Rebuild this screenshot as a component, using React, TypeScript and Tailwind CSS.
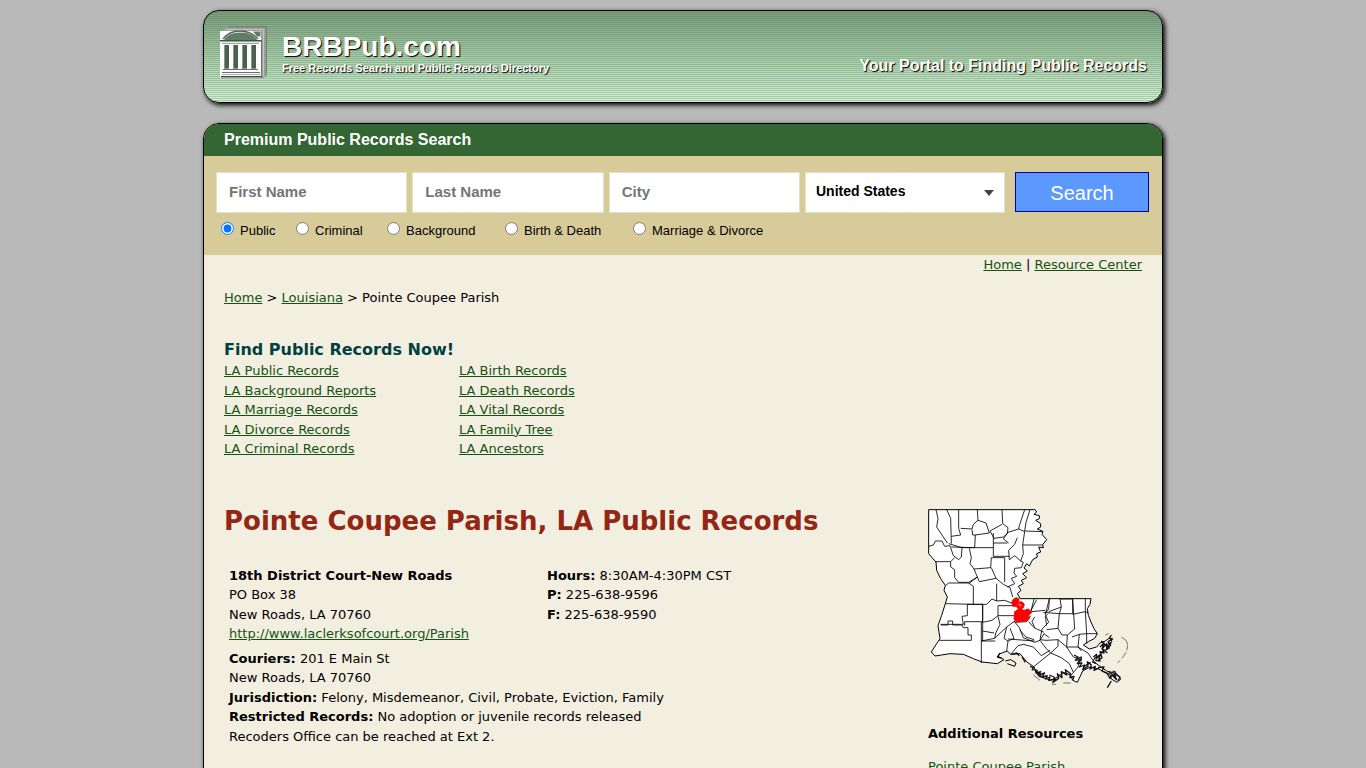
import React, { useState } from 'react';

const recordTypes = [
  { id: 'public', label: 'Public', width: 'w-[75px]' },
  { id: 'criminal', label: 'Criminal', width: 'w-[91px]' },
  { id: 'background', label: 'Background', width: 'w-[118px]' },
  { id: 'birth-death', label: 'Birth & Death', width: 'w-[128px]' },
  { id: 'marriage-divorce', label: 'Marriage & Divorce', width: 'w-auto' },
];

const searchFields = ['First Name', 'Last Name', 'City'];

const recordLinks = [
  ['LA Public Records', 'LA Background Reports', 'LA Marriage Records', 'LA Divorce Records', 'LA Criminal Records'],
  ['LA Birth Records', 'LA Death Records', 'LA Vital Records', 'LA Family Tree', 'LA Ancestors'],
];

const TextLink: React.FC<{ children: React.ReactNode }> = ({ children }) => (
  <a href="#" className="text-[#145214] underline hover:no-underline">
    {children}
  </a>
);

// Courthouse with four columns
const Logo = () => (
  <svg width="47" height="54" viewBox="0 0 47 54" aria-hidden="true">
    <path d="M2 5L9 .5H46.500V50L41 53V5Z" fill="#9aa09b" />
    <path d="M5 3.500H43.500V50" fill="none" stroke="#c3c7c3" />
    <path d="M9 .8H46.300V49" fill="none" stroke="#70776f" />
    <path d="M41.500 14V52" stroke="#6c736d" />
    <path d="M0 5H41V52H0Z" fill="#fbfcfb" />
    <path d="M4 14Q8 6.500 20 6.500Q33 6.500 37 14Z" fill="#5f7f64" />
    <path d="M3 13Q9 5 20 5Q31 5 38 13" fill="none" stroke="#5b625c" strokeWidth="1.300" />
    <path d="M33 5.500H40.500V10.500H37Z" fill="#5f7f64" />
    <path d="M0 14.700H41" stroke="#474e48" strokeWidth="1.600" />
    <path d="M2 17.300H39" stroke="#8f9690" />
    <path d="M4 19H9V43H4ZM13 19H18V43H13ZM22 19H27V43H22ZM31 19H36V43H31Z" fill="#8d968f" />
    <path d="M5 19H9V42H5ZM14 19H18V42H14ZM23 19H27V42H23ZM32 19H36V42H32Z" fill="#48604c" />
    <path d="M3 43.500H38M2 46.500H40" stroke="#666d67" />
    <path d="M2 48.500H40" stroke="#a9aea9" />
    <path d="M1 50.700H41" stroke="#3e443f" strokeWidth="1.500" />
  </svg>
);

const ParishMap = () => (
  <svg width="200" height="182" viewBox="24 26 600 546" role="img" aria-label="Map of Louisiana parishes" strokeLinejoin="round">
    <path
      d="M26 28H345L350 35L342 42L358 46L358 55L347 60L362 70L362 80L352 86L368 93L366 102L380 118L368 133L370 142L356 140L362 155L350 160L352 170L338 178L328 197L320 190L312 203L322 212L308 220L320 232L304 240L310 250L295 258L303 270L292 280L298 290L300 295H513L510 312L502 325L505 345L513 365L522 385L532 400L524 414L505 424L490 434L508 446L530 440L540 428L556 422L570 412L576 424L562 432L568 444L548 452L540 464L524 472L520 482L534 494L560 512L590 520L602 536L592 546L574 536L570 522L552 514L536 506L510 500L488 512L472 546L458 540L452 524L430 516L414 530L392 540L370 532L348 514L342 500L320 484L300 460L272 462L262 452L240 460L234 468L252 478L232 490L186 485L160 475L130 462L90 460L45 467L34 455L50 430L60 415L54 376L65 345L76 310L82 290L72 270L76 255L62 235L50 210L48 185L36 172L26 160Z"
      fill="#fff"
      stroke="#000"
      strokeWidth="3"
    />
    <g fill="none" stroke="#000" strokeWidth="2.500">
      <path d="M48 28L54 55L50 80L66 104L82 128M80 28L92 54L94 130M116 28V84L122 104L94 108M172 28L174 60L160 72L156 86L122 84M174 60L198 68L208 98L166 104M246 28L248 70L264 82L262 100L250 110L222 114L210 92L246 72M314 28L298 76L296 86L264 96L250 116L266 128M330 28L318 66L314 92L370 94" />
      <path d="M26 138L40 134L46 122L66 122L74 138L90 136L100 166L116 178L124 170L126 142L86 130M94 140L164 142L166 104M126 142H220V168H268M156 88L158 104L166 104M220 98V142M220 128H262M296 86L314 94L308 134L368 134M308 134L310 160L302 182L284 166L268 178L266 150L284 132L292 112" />
      <path d="M48 184L92 184V200L104 208V232L116 246H146L172 230M92 184L104 172M148 144L154 172L150 190L162 206L212 202L214 172M162 206L172 230L178 244L228 234L214 202M214 172H254V246M228 234L250 252L270 262L278 290M302 182L310 186L304 202L284 204L282 218L290 228L274 234L284 250L262 260" />
      <path d="M76 256L86 248H146L160 258V312L76 310M172 230L146 250M230 250V302L216 296L200 312L160 312M230 302L254 300L280 310M142 312V346L126 348L130 372H62M188 312V422M142 312H188V364H134V376M62 374H84V362H98V374H126L130 382H144V404H154V420H58M188 366L216 360L234 346V316L286 316M184 364V488M234 348L240 372L228 396L224 414L184 422M188 392L222 398" />
      <path d="M234 346H284M224 414L260 380L284 362M260 380L252 414L264 422L260 452M264 422L282 414L270 384M282 362L298 382L310 412L344 426L360 420L372 400L388 412M264 416L344 422M184 422H226M272 462L294 436L310 432L340 440L364 466L390 450M284 366L320 364L332 346M326 364L342 382L372 396M332 332L350 298M334 334L376 330M300 390L318 410L342 418" />
      <path d="M388 296L376 342L386 366L366 386M388 296L386 326L376 340M342 296L332 336M420 296L424 320L386 334M424 320L418 340L370 336M384 340L376 348L380 376M418 340H458V296H420M418 340L414 384L380 388M458 296L464 386L442 404M496 296L496 334L504 338M458 342L496 334L500 400L478 402L456 410M500 400H532M478 402L474 440L484 452M442 404L440 440L476 440M414 384L426 404L442 404M366 386L360 418L378 420L414 418L440 440" />
      <path d="M340 500L392 458L424 472L448 490L460 516M392 458L378 444L360 420M440 440L460 470L486 478M474 440L504 458L520 482M500 400V430M414 418V438L392 458M344 382L336 364L344 350M480 480L474 500L454 524" />
    </g>
    <path d="M281 296L289 292L297 296L296 306L305 304L313 312L310 322L302 326L312 330L326 326L335 337L326 344L328 354L318 362L288 364L282 356L284 334L296 326L288 318L277 317L276 304Z" fill="#f00" stroke="#f00" strokeWidth="3" />
    <path d="M294 315L298 311L303 315L300 319" fill="none" stroke="#fff" strokeWidth="2" />
    {/* marshes along the gulf coast */}
    <g fill="none" stroke="#111" strokeWidth="4">
      <path d="M340 508L352 510L348 518L362 514L356 524L374 518L366 530L382 526L376 536L390 530L386 540L404 536L398 546L416 534L412 520L426 532L424 514L440 524L436 508L452 520L450 532L462 528L458 540M462 464L474 470L466 480L480 478L472 490L486 488L478 500L494 494L488 508L504 498L502 484L514 494L510 506L526 498L522 510L538 502" />
      <path d="M540 440L552 428L546 446L560 430L560 448L572 434L564 424L578 416L568 414L574 404M520 470L530 462L528 476L540 464L536 480L546 472L540 454L552 458L548 446L562 458M534 502L552 500L546 512L562 520L570 534L576 524L590 538L582 520L600 530L594 542M574 542L562 562M588 516L578 512M516 484L528 490" />
      <path d="M346 512L358 528L372 532M388 524L402 530L408 542M468 476L484 470L482 484M490 500L512 486M544 422L562 440L574 426M526 480L542 482M566 514L588 530M330 498L340 502L336 510M240 458L232 470L246 474M276 462L290 458L298 466M306 470L316 486" />
    </g>
    <path d="M256 482L272 478L288 488L284 498L262 490" fill="none" stroke="#000" strokeWidth="3" />
    <path d="M604 410L618 420L624 434L620 450M618 456L606 474M600 480L592 488M556 404L566 400M340 524L360 540M396 552H408M430 548H452" fill="none" stroke="#333" strokeWidth="2" />
  </svg>
);

export default function App() {
  const [recordType, setRecordType] = useState('public');

  return (
    <div className="min-h-screen bg-[#b9b9b9] pt-[10px] font-['DejaVu_Sans',Verdana,sans-serif] text-[13px] leading-normal text-black">
      <div className="mx-auto max-w-[960px]">
        {/* Banner */}
        <header className="mb-5 flex h-[93px] items-start justify-between rounded-2xl border border-black bg-[repeating-linear-gradient(to_bottom,transparent_0px,transparent_1px,rgba(60,120,65,0.28)_1px,rgba(60,120,65,0.28)_2px),linear-gradient(to_bottom,#7a9a7c,#a9cbab_50%,#d6f0d8)] pr-[15px] pl-4 font-['Liberation_Sans',Arial,sans-serif] font-bold text-white shadow-[2px_2px_5px_#000] [text-shadow:1px_1px_1px_#000]">
          <div className="flex gap-[15px] pt-[15px]">
            <Logo />
            <div className="pt-[5px]">
              <div className="text-[28px] leading-[31px]">BRBPub.com</div>
              <div className="text-[11px] leading-3">Free Records Search and Public Records Directory</div>
            </div>
          </div>
          <div className="pt-[43px] text-base">Your Portal to Finding Public Records</div>
        </header>

        <div className="overflow-hidden rounded-t-2xl border border-black bg-[#f3efe0] pb-10 shadow-[2px_2px_5px_#000]">
          {/* Premium search */}
          <section className="font-['Liberation_Sans',Arial,sans-serif]">
            <h2 className="bg-[#336633] px-5 text-base leading-8 font-bold text-white">Premium Public Records Search</h2>
            <form className="h-[99px] bg-[#d7cb9a] pt-4 pr-[13px] pl-3" onSubmit={(e) => e.preventDefault()}>
              <div className="flex gap-[5px]">
                {searchFields.map((field) => (
                  <input
                    key={field}
                    type="text"
                    aria-label={field}
                    placeholder={field}
                    className="h-[41px] min-w-0 flex-1 border border-[#e5dfc4] bg-white px-3 pb-[2px] text-[15px] font-bold placeholder:text-[#757575]"
                  />
                ))}
                <div className="relative w-[200px]">
                  <select
                    aria-label="State"
                    className="h-[41px] w-full appearance-none border border-[#e5dfc4] bg-white px-[10px] pb-1 text-sm font-bold"
                  >
                    <option>United States</option>
                    <option>Louisiana</option>
                  </select>
                  <svg width="10" height="6" viewBox="0 0 10 6" className="pointer-events-none absolute top-[18px] right-[11px]" aria-hidden="true">
                    <path d="M0 0H10L5 6Z" fill="#444" />
                  </svg>
                </div>
                <button type="submit" className="ml-[5px] h-10 w-[134px] border border-[#0000b0] bg-[#5c99ff] pt-[2px] text-xl text-white">
                  Search
                </button>
              </div>
              <div className="flex pt-2 pl-[5px]">
                {recordTypes.map((type) => (
                  <label key={type.id} className={`flex items-start gap-[6px] ${type.width}`}>
                    <input
                      type="radio"
                      name="recordType"
                      value={type.id}
                      checked={recordType === type.id}
                      onChange={() => setRecordType(type.id)}
                      className="mt-px h-[13px] w-[13px] shrink-0"
                    />
                    <span className="whitespace-nowrap">{type.label}</span>
                  </label>
                ))}
              </div>
            </form>
          </section>

          <div className="px-5">
            <nav className="text-right">
              <TextLink>Home</TextLink> | <TextLink>Resource Center</TextLink>
            </nav>

            <nav className="mt-[13px]">
              <TextLink>Home</TextLink> &gt; <TextLink>Louisiana</TextLink> &gt; Pointe Coupee Parish
            </nav>

            <section className="mt-[31px]">
              <h3 className="text-base leading-[23px] font-bold text-[#004040]">Find Public Records Now!</h3>
              <div className="flex">
                {recordLinks.map((column) => (
                  <ul key={column[0]} className="w-[235px]">
                    {column.map((link) => (
                      <li key={link}>
                        <TextLink>{link}</TextLink>
                      </li>
                    ))}
                  </ul>
                ))}
              </div>
            </section>

            <div className="mt-[43px] flex">
              <main className="flex-1">
                <h1 className="text-[26px] font-bold text-[#942614]">Pointe Coupee Parish, LA Public Records</h1>

                {/* Court details */}
                <div className="mt-[25px] px-[5px]">
                  <div className="grid grid-cols-[318px_1fr]">
                    <div>
                      <b>18th District Court-New Roads</b>
                      <p>PO Box 38</p>
                      <p>New Roads, LA 70760</p>
                      <TextLink>http://www.laclerksofcourt.org/Parish</TextLink>
                    </div>
                    <div>
                      <p><b>Hours:</b> 8:30AM-4:30PM CST</p>
                      <p><b>P:</b> 225-638-9596</p>
                      <p><b>F:</b> 225-638-9590</p>
                    </div>
                  </div>
                  <div className="mt-[5px]">
                    <p><b>Couriers:</b> 201 E Main St</p>
                    <p>New Roads, LA 70760</p>
                    <p><b>Jurisdiction:</b> Felony, Misdemeanor, Civil, Probate, Eviction, Family</p>
                    <p><b>Restricted Records:</b> No adoption or juvenile records released</p>
                    <p>Recoders Office can be reached at Ext 2.</p>
                  </div>
                </div>
              </main>

              <aside className="w-[214px] pt-[7px]">
                <ParishMap />
                <h4 className="mt-[33px] font-bold">Additional Resources</h4>
                <p className="mt-[14px]">
                  <TextLink>Pointe Coupee Parish</TextLink>
                </p>
              </aside>
            </div>
          </div>
        </div>
      </div>
    </div>
  );
}
